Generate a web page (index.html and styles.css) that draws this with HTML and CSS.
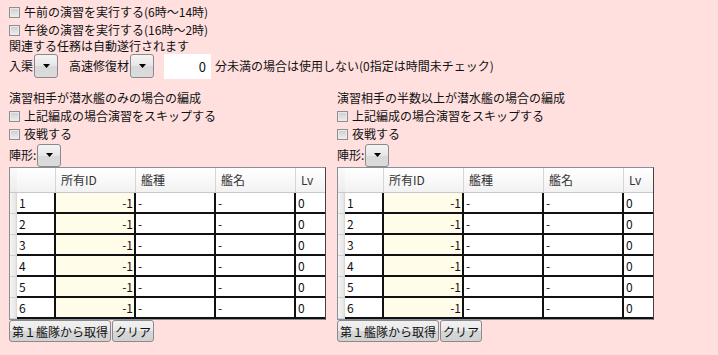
FILE: index.html
```html
<!DOCTYPE html>
<html lang="ja">
<head>
  <meta charset="UTF-8">
  <title>演習設定</title>
  <link rel="stylesheet" href="styles.css">
</head>
<body>
  <div class="main">
    <div class="row check-row"><span class="check"></span>午前の演習を実行する(6時～14時)</div>
    <div class="row check-row"><span class="check"></span>午後の演習を実行する(16時～2時)</div>
    <div class="row text-row">関連する任務は自動遂行されます</div>
    <div class="row option-row">
      <span>入渠</span>
      <button class="combo"><svg width="7" height="4" viewBox="0 0 7 4"><path d="M0 0h7L3.5 4z" fill="#000"/></svg></button>
      <span class="label-gap">高速修復材</span>
      <button class="combo"><svg width="7" height="4" viewBox="0 0 7 4"><path d="M0 0h7L3.5 4z" fill="#000"/></svg></button>
      <div class="num-box">0</div>
      <span>分未満の場合は使用しない(0指定は時間未チェック)</span>
    </div>

    <div class="panels">
      <div class="panel">
        <div class="row text-row-2">演習相手が潜水艦のみの場合の編成</div>
        <div class="row check-row"><span class="check"></span>上記編成の場合演習をスキップする</div>
        <div class="row check-row"><span class="check"></span>夜戦する</div>
        <div class="row form-row">
          <span>陣形:</span>
          <button class="combo"><svg width="7" height="4" viewBox="0 0 7 4"><path d="M0 0h7L3.5 4z" fill="#000"/></svg></button>
        </div>
        <div class="grid">
          <div class="corner"></div><div class="head"></div><div class="head">所有ID</div><div class="head">艦種</div><div class="head">艦名</div><div class="head last">Lv</div>
          <div class="strip"></div><div class="cell">1</div><div class="cell id">-1</div><div class="cell">-</div><div class="cell">-</div><div class="cell">0</div>
          <div class="strip"></div><div class="cell">2</div><div class="cell id">-1</div><div class="cell">-</div><div class="cell">-</div><div class="cell">0</div>
          <div class="strip"></div><div class="cell">3</div><div class="cell id">-1</div><div class="cell">-</div><div class="cell">-</div><div class="cell">0</div>
          <div class="strip"></div><div class="cell">4</div><div class="cell id">-1</div><div class="cell">-</div><div class="cell">-</div><div class="cell">0</div>
          <div class="strip"></div><div class="cell">5</div><div class="cell id">-1</div><div class="cell">-</div><div class="cell">-</div><div class="cell">0</div>
          <div class="strip"></div><div class="cell">6</div><div class="cell id">-1</div><div class="cell">-</div><div class="cell">-</div><div class="cell">0</div>
        </div>
        <div class="buttons">
          <button class="btn">第１艦隊から取得</button><button class="btn">クリア</button>
        </div>
      </div>

      <div class="panel">
        <div class="row text-row-2">演習相手の半数以上が潜水艦の場合の編成</div>
        <div class="row check-row"><span class="check"></span>上記編成の場合演習をスキップする</div>
        <div class="row check-row"><span class="check"></span>夜戦する</div>
        <div class="row form-row">
          <span>陣形:</span>
          <button class="combo"><svg width="7" height="4" viewBox="0 0 7 4"><path d="M0 0h7L3.5 4z" fill="#000"/></svg></button>
        </div>
        <div class="grid">
          <div class="corner"></div><div class="head"></div><div class="head">所有ID</div><div class="head">艦種</div><div class="head">艦名</div><div class="head last">Lv</div>
          <div class="strip"></div><div class="cell">1</div><div class="cell id">-1</div><div class="cell">-</div><div class="cell">-</div><div class="cell">0</div>
          <div class="strip"></div><div class="cell">2</div><div class="cell id">-1</div><div class="cell">-</div><div class="cell">-</div><div class="cell">0</div>
          <div class="strip"></div><div class="cell">3</div><div class="cell id">-1</div><div class="cell">-</div><div class="cell">-</div><div class="cell">0</div>
          <div class="strip"></div><div class="cell">4</div><div class="cell id">-1</div><div class="cell">-</div><div class="cell">-</div><div class="cell">0</div>
          <div class="strip"></div><div class="cell">5</div><div class="cell id">-1</div><div class="cell">-</div><div class="cell">-</div><div class="cell">0</div>
          <div class="strip"></div><div class="cell">6</div><div class="cell id">-1</div><div class="cell">-</div><div class="cell">-</div><div class="cell">0</div>
        </div>
        <div class="buttons">
          <button class="btn">第１艦隊から取得</button><button class="btn">クリア</button>
        </div>
      </div>
    </div>
  </div>
</body>
</html>
```

FILE: styles.css
```css
* {
  margin: 0;
  padding: 0;
  box-sizing: border-box;
}

body {
  background-color: #ffe0df;
  font-family: "Noto Sans CJK JP", "Noto Sans", sans-serif;
  font-size: 12px;
  line-height: 16px;
  color: #111;
}

.main {
  padding: 3px 0 0 9px;
}

.row {
  display: flex;
  align-items: center;
  white-space: nowrap;
}

.check-row {
  height: 18px;
}

.text-row {
  height: 14px;
}

.text-row-2 {
  height: 18px;
}

.check {
  display: inline-block;
  width: 11px;
  height: 11px;
  margin-right: 4px;
  border: 1px solid #8e8f8f;
  background: linear-gradient(#cbcbcb, #efefef);
  box-shadow: inset 0 0 0 1px #eaeaea;
}

.option-row {
  height: 26px;
}

.combo {
  width: 24px;
  height: 24px;
  margin-left: 1px;
  display: flex;
  align-items: center;
  justify-content: center;
  border: 1px solid #8a8a8a;
  border-radius: 3px;
  background: linear-gradient(#f4f4f4, #e6e6e6 50%, #d8d8d8 51%, #dcdcdc);
}

.label-gap {
  margin-left: 11px;
}

.num-box {
  width: 47px;
  height: 25px;
  margin: 0 4px 0 10px;
  padding-right: 5px;
  background-color: #fff;
  text-align: right;
  line-height: 25px;
  font-size: 13px;
}

.panels {
  display: flex;
  gap: 11px;
  margin-top: 10px;
}

.panel {
  width: 317px;
}

.form-row {
  height: 24px;
}

.form-row .combo {
  width: 24px;
  height: 23px;
  margin-left: 1px;
}

.grid {
  display: grid;
  grid-template-columns: 7px 39px 80px 80px 80px 1fr;
  grid-auto-rows: 21px;
  grid-template-rows: 25px;
  border: 1px solid #8a8e96;
  border-right-color: #444;
  background-color: #fff;
}

.corner {
  background: linear-gradient(#fafafa, #ececec);
  border-bottom: 1px solid #c8c8c8;
}

.head {
  padding-left: 5px;
  line-height: 24px;
  color: #333;
  background: linear-gradient(#ffffff, #f2f2f2);
  border-right: 1px solid #d5d5d5;
  border-bottom: 1px solid #c8c8c8;
}

.head.last {
  border-right: none;
}

.strip {
  background: linear-gradient(90deg, #f6f6f6, #e4e4e4);
  border-bottom: 1px solid #d0d0d0;
  border-right: 1px solid #d8d8d8;
}

.cell {
  padding: 0 2px;
  line-height: 19px;
  border-right: 2px solid #111;
  border-bottom: 2px solid #111;
}

.cell:nth-child(6n) {
  border-right: none;
}

.cell.id {
  background-color: #fffdea;
  text-align: right;
  padding-right: 1px;
}

.buttons {
  display: flex;
  gap: 1px;
}

.btn {
  height: 22px;
  padding: 0 2px;
  font-family: inherit;
  font-size: 12px;
  color: #111;
  border: 1px solid #8a8a8a;
  border-radius: 3px;
  background: linear-gradient(#f2f2f2, #e8e8e8 50%, #d6d6d6 51%, #d2d2d2);
}
```
